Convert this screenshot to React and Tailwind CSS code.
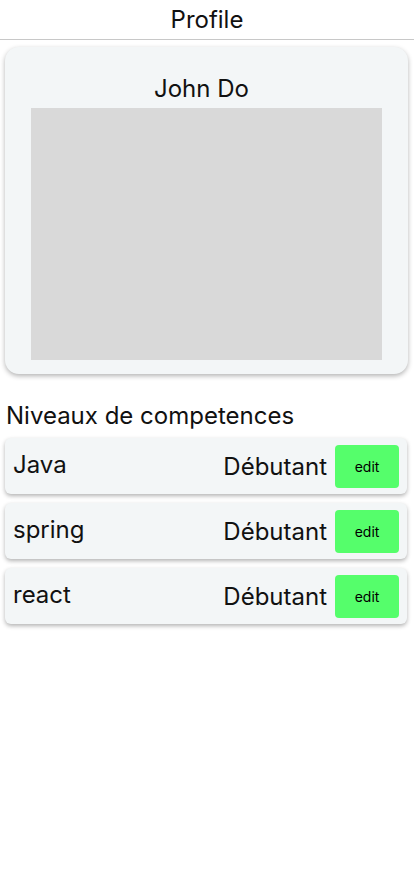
import { useState } from "react";

const skills = [
  { name: "Java", level: "Débutant" },
  { name: "spring", level: "Débutant" },
  { name: "react", level: "Débutant" },
];

function SkillRow({ skill }) {
  return (
    <div className="flex items-center h-[56px] mb-[9px] ml-[5px] mr-[7px] pl-[8px] pr-[8px] bg-[#f3f6f7] rounded-[6px] shadow-[0_2px_4px_rgba(0,0,0,0.3)]">
      <span className="flex-1 text-[24px] leading-[29px] -mt-[4px]">{skill.name}</span>
      <span className="text-[24px] leading-[29px]">{skill.level}</span>
      <button className="ml-[8px] w-[64px] h-[43px] bg-[#55fe6b] rounded-[4px] text-[14px] text-black">
        edit
      </button>
    </div>
  );
}

function App() {
  const [user] = useState({ name: "John Do" });

  return (
    <div className="min-h-screen bg-white text-[#111] font-['Inter',sans-serif]">
      <div className="h-[40px] border-b border-[#c8c8c8] flex items-center justify-center">
        <h1 className="text-[24px] leading-[29px]">Profile</h1>
      </div>
      <div className="mt-[7px] ml-[5px] mr-[6px] bg-[#f3f6f7] rounded-[14px] shadow-[0_2px_5px_rgba(0,0,0,0.3)] px-[26px] pt-[27px] pb-[14px]">
        <p className="text-center pr-[10px] text-[24px] leading-[29px]">{user.name}</p>
        <div className="mt-[5px] h-[252px] bg-[#d9d9d9]" />
      </div>
      <h2 className="mt-[27px] ml-[6px] text-[24px] leading-[29px]">Niveaux de competences</h2>
      <div className="mt-[8px]">
        {skills.map((s) => (
          <SkillRow key={s.name} skill={s} />
        ))}
      </div>
    </div>
  );
}

export default App;
